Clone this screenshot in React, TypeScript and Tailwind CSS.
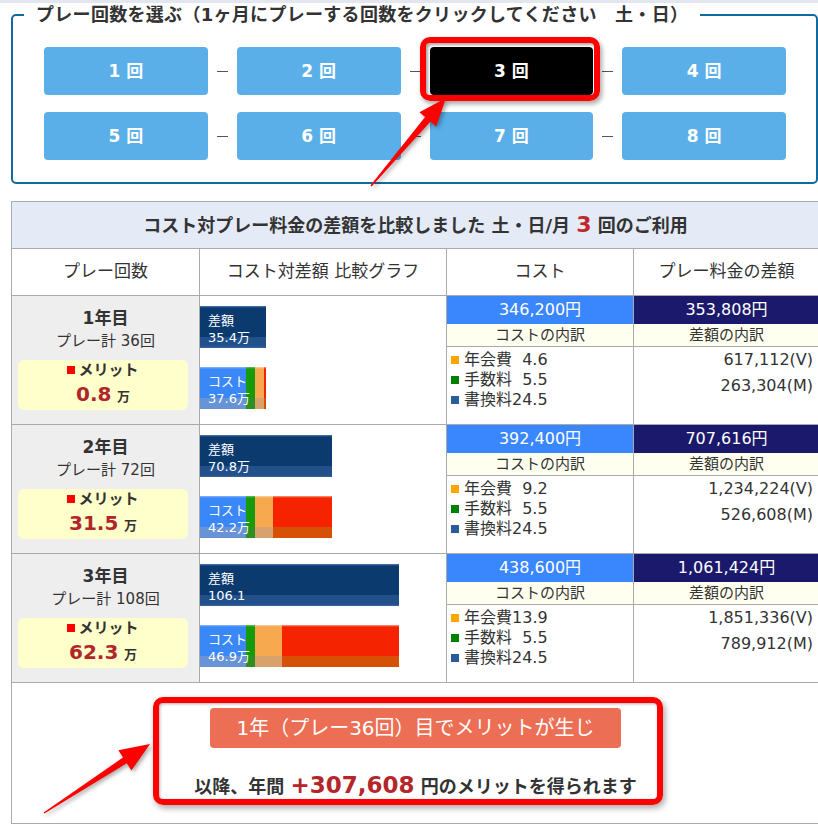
import React from "react";

type Row = {
  year: string;
  plays: string;
  merit: string;
  diff: string;
  diffW: number;
  cost: string;
  seg: number[];
  costTotal: string;
  diffTotal: string;
  fee: string;
  v: string;
  m: string;
};

const rows: Row[] = [
  {
    year: "1年目",
    plays: "プレー計 36回",
    merit: "0.8",
    diff: "35.4万",
    diffW: 66,
    cost: "37.6万",
    seg: [46, 9, 9, 2],
    costTotal: "346,200円",
    diffTotal: "353,808円",
    fee: "\u00a0\u00a04.6",
    v: "617,112(V)",
    m: "263,304(M)",
  },
  {
    year: "2年目",
    plays: "プレー計 72回",
    merit: "31.5",
    diff: "70.8万",
    diffW: 132,
    cost: "42.2万",
    seg: [46, 9, 18, 59],
    costTotal: "392,400円",
    diffTotal: "707,616円",
    fee: "\u00a0\u00a09.2",
    v: "1,234,224(V)",
    m: "526,608(M)",
  },
  {
    year: "3年目",
    plays: "プレー計 108回",
    merit: "62.3",
    diff: "106.1",
    diffW: 199,
    cost: "46.9万",
    seg: [46, 9, 27, 117],
    costTotal: "438,600円",
    diffTotal: "1,061,424円",
    fee: "13.9",
    v: "1,851,336(V)",
    m: "789,912(M)",
  },
];

const segCls = [
  "bg-[linear-gradient(to_bottom,#8ab8ff_0px,#3a87f7_2px,#3a87f7_31px,#6893d6_31px)]",
  "bg-[linear-gradient(to_bottom,#6cc060_0px,#159b0b_2px,#159b0b_31px,#2d8e22_31px)]",
  "bg-[linear-gradient(to_bottom,#fcd0a0_0px,#f6a94f_2px,#f6a94f_31px,#d8a26c_31px)]",
  "bg-[linear-gradient(to_bottom,#fb9a80_0px,#f52300_2px,#f52300_31px,#d65006_31px)]",
];

const navyBar =
  "bg-[linear-gradient(to_bottom,#4f7cb0_0px,#0b3a6f_2px,#0b3a6f_31px,#22508b_31px,#22508b_40px,#3a66a0_42px)]";

function Btn({ n, active }: { n: number; active?: boolean }) {
  return (
    <div
      className={
        "relative h-[48px] rounded-[4px] flex items-center justify-center text-white font-bold text-[17px] leading-none " +
        (active ? "bg-black" : "bg-[#5aafe9]")
      }
    >
      <span>
        {n} 回
      </span>
      {active && (
        <span className="absolute left-[-10px] top-[-10px] right-[-7px] bottom-[-6px] border-[6px] border-[#ff0000] rounded-[10px] shadow-[2px_3px_5px_rgba(0,0,0,0.35),inset_2px_2px_3px_rgba(0,0,0,0.35)]" />
      )}
    </div>
  );
}

function Sep() {
  return (
    <div className="flex items-center justify-center">
      <div className="w-[11px] h-px bg-[#555]" />
    </div>
  );
}

function Sq({ c }: { c: string }) {
  return <span className={"inline-block w-[8px] h-[8px] mr-[5px] align-[1px] " + c} />;
}

export default function App() {
  return (
    <div className="relative w-[818px] h-[827px] overflow-hidden bg-white text-[#333] font-['DejaVu_Sans','Noto_Sans_CJK_JP',sans-serif]">
      <div className="h-[3px] bg-[#e3e6ee]" />

      <fieldset className="ml-[11px] w-[807px] border-2 border-[#0f6aa0] rounded-[5px] px-[11px] pb-[22px]">
        <legend className="px-3 text-[18px] leading-[24px] font-bold tracking-[0.3px] text-[#333]">
          プレー回数を選ぶ（1ヶ月にプレーする回数をクリックしてください　土・日）
        </legend>
        <div className="mt-[20px] ml-[20px] mr-[19px] grid grid-cols-[1fr_29px_1fr_29px_1fr_29px_1fr] gap-y-[17px]">
          <Btn n={1} />
          <Sep />
          <Btn n={2} />
          <Sep />
          <Btn n={3} active />
          <Sep />
          <Btn n={4} />
          <Btn n={5} />
          <Sep />
          <Btn n={6} />
          <Sep />
          <Btn n={7} />
          <Sep />
          <Btn n={8} />
        </div>
      </fieldset>

      <div className="mt-[17px] ml-[11px] w-[809px] border-l border-t border-[#aaa] grid grid-cols-[188px_247px_187px_186px]">
        <div className="col-span-4 h-[47px] border-r border-b border-[#aaa] bg-[#e4ebf7] flex items-center justify-center font-bold text-[18px] leading-[26px]">
          <span>
            コスト対プレー料金の差額を比較しました 土・日/月{" "}
            <span className="text-[22px] text-[#c0272d]">3</span> 回のご利用
          </span>
        </div>

        {["プレー回数", "コスト対差額 比較グラフ", "コスト", "プレー料金の差額"].map((h) => (
          <div
            key={h}
            className="h-[47px] border-r border-b border-[#aaa] flex items-center justify-center text-[17px]"
          >
            {h}
          </div>
        ))}

        {rows.map((r) => (
          <React.Fragment key={r.year}>
            <div className="h-[129px] border-r border-b border-[#aaa] bg-[#eeeeee] pt-[11px]">
              <div className="text-center font-bold text-[17px] leading-[22px]">{r.year}</div>
              <div className="text-center text-[15px] leading-[24px]">{r.plays}</div>
              <div className="mt-[7px] ml-[6px] w-[170px] h-[50px] rounded-[6px] bg-[#ffffcc] text-center">
                <div className="font-bold text-[15px] leading-[20px]">
                  <span className="inline-block w-[8px] h-[8px] bg-[#ff0000] mr-[3px] align-[1px]" />
                  メリット
                </div>
                <div className="leading-[28px] font-bold">
                  <span className="text-[20px] text-[#b0262a]">{r.merit}</span>{" "}
                  <span className="text-[13px]">万</span>
                </div>
              </div>
            </div>

            <div className="h-[129px] border-r border-b border-[#aaa] pt-[10px]">
              <div className={"relative h-[42px] " + navyBar} style={{ width: r.diffW }}>
                <div className="absolute inset-0 pl-[8px] pt-[6px] text-white text-[13px] leading-[17px] whitespace-nowrap">
                  <div>差額</div>
                  <div>{r.diff}</div>
                </div>
              </div>
              <div className="relative mt-[19px] h-[42px] flex">
                {r.seg.map((w, i) => (
                  <div key={i} className={"h-full " + segCls[i]} style={{ width: w }} />
                ))}
                <div className="absolute inset-0 pl-[8px] pt-[6px] text-white text-[13px] leading-[17px] whitespace-nowrap">
                  <div>コスト</div>
                  <div>{r.cost}</div>
                </div>
              </div>
            </div>

            <div className="h-[129px] border-r border-b border-[#aaa]">
              <div className="h-[28px] bg-[#3a87fd] text-white text-[16px] leading-[28px] text-center">
                {r.costTotal}
              </div>
              <div className="h-[23px] border-b border-[#aaa] bg-[#fffff0] text-[15px] leading-[22px] text-center">
                コストの内訳
              </div>
              <div className="pt-[3px] pl-[4px] text-[16px] leading-[20px] whitespace-nowrap">
                <div>
                  <Sq c="bg-[#ffa500]" />
                  年会費{r.fee}
                </div>
                <div>
                  <Sq c="bg-[#008000]" />
                  手数料{"\u00a0\u00a0"}5.5
                </div>
                <div>
                  <Sq c="bg-[#2a5c9a]" />
                  書換料24.5
                </div>
              </div>
            </div>

            <div className="h-[129px] border-r border-b border-[#aaa]">
              <div className="h-[28px] bg-[#1b196c] text-white text-[16px] leading-[28px] text-center">
                {r.diffTotal}
              </div>
              <div className="h-[23px] border-b border-[#aaa] bg-[#fffff0] text-[15px] leading-[22px] text-center">
                差額の内訳
              </div>
              <div className="pr-[6px] text-right text-[16px] leading-[26px]">
                <div>{r.v}</div>
                <div>{r.m}</div>
              </div>
            </div>
          </React.Fragment>
        ))}

        <div className="relative col-span-4 h-[141px] border-r border-b border-[#aaa] flex flex-col items-center pt-[25px]">
          <div className="w-[411px] h-[40px] rounded-[4px] bg-[#ec6e55] text-white text-[20px] flex items-center justify-center">
            1年（プレー36回）目でメリットが生じ
          </div>
          <div className="mt-[24px] leading-[26px] font-bold text-[18px] whitespace-nowrap">
            以降、年間 <span className="text-[23px] text-[#b5262a]">+307,608</span> 円のメリットを得られます
          </div>
          <div className="absolute left-[141px] top-[14px] w-[510px] h-[108px] border-[6px] border-[#ff0000] rounded-[10px] shadow-[2px_3px_6px_rgba(0,0,0,0.35),inset_1px_1px_3px_rgba(0,0,0,0.3)]" />
        </div>
      </div>

      <svg
        className="absolute left-0 top-0 pointer-events-none drop-shadow-[2px_2px_2px_rgba(0,0,0,0.35)]"
        width="818"
        height="827"
        viewBox="0 0 818 827"
      >
        <polygon
          fill="#ff0000"
          points="371.6,186.5 430.5,121.6 436.2,126.4 446,98 419.4,112.2 425.1,117 370.4,185.6"
        />
        <polygon
          fill="#ff0000"
          points="44.4,813.6 126.8,763.3 131.4,770.5 150,744 118.4,750.3 123,757.5 43.6,812.4"
        />
      </svg>
    </div>
  );
}
